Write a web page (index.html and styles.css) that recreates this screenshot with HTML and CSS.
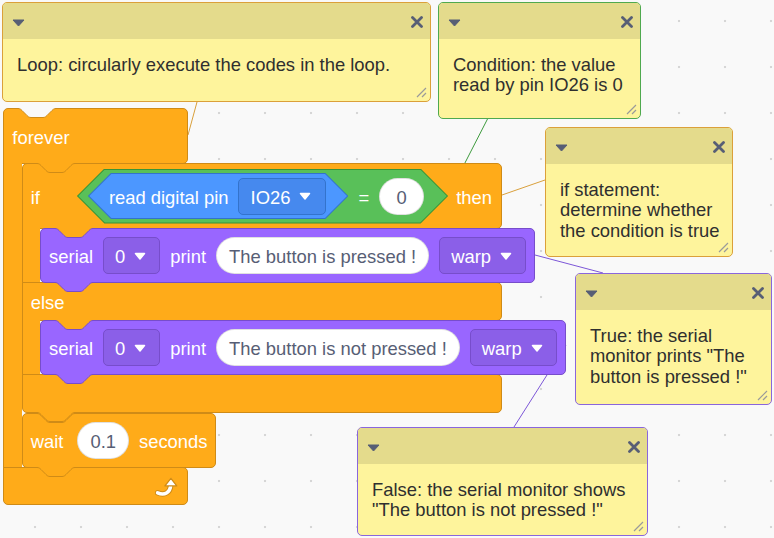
FILE: index.html
```html
<!DOCTYPE html>
<html lang="en">
<head>
<meta charset="utf-8">
<title>Blocks</title>
<link rel="stylesheet" href="styles.css">
</head>
<body>
<div class="canvas">
  <svg class="links" width="774" height="538" viewBox="0 0 774 538" aria-hidden="true">
    <line class="l-orange" x1="188" y1="135" x2="197" y2="102"/>
    <line class="l-green" x1="449" y1="194" x2="488" y2="118"/>
    <line class="l-orange" x1="502" y1="195" x2="545" y2="180"/>
    <line class="l-purple" x1="535" y1="255" x2="603" y2="273"/>
    <line class="l-purple" x1="566" y1="345" x2="514" y2="427"/>
  </svg>

  <div class="script">
    <div class="block c-block control forever">
      <svg class="notch" width="38" height="10" viewBox="0 0 38 10"><path class="nf" d="M0,0 V0.5 c2,0 3,1 4,2 l5,5 c1,1 2,2 4,2 h12 c2,0 3,-1 4,-2 l5,-5 c1,-1 2,-2 4,-2 V0 Z"/><path class="ns" d="M0,0.5 c2,0 3,1 4,2 l5,5 c1,1 2,2 4,2 h12 c2,0 3,-1 4,-2 l5,-5 c1,-1 2,-2 4,-2"/></svg>
      <div class="arm top-arm"><span class="t">forever</span></div>
      <div class="mouth">
        <div class="spine"></div>
        <div class="stack">

          <div class="block c-block control if-block">
            <svg class="notch" width="38" height="10" viewBox="0 0 38 10"><path class="nf" d="M0,0 V0.5 c2,0 3,1 4,2 l5,5 c1,1 2,2 4,2 h12 c2,0 3,-1 4,-2 l5,-5 c1,-1 2,-2 4,-2 V0 Z"/><path class="ns" d="M0,0.5 c2,0 3,1 4,2 l5,5 c1,1 2,2 4,2 h12 c2,0 3,-1 4,-2 l5,-5 c1,-1 2,-2 4,-2"/></svg>
            <div class="arm top-arm">
              <span class="t if-label">if</span>
              <div class="hex op">
                <div class="hex sensing">
                  <span class="t">read digital pin</span>
                  <div class="dropdown pin-dd"><span class="t">IO26</span><svg class="caret" width="12" height="8" viewBox="0 0 12 8"><path d="M1.5,1.5 H10.5 L6,7 Z"/></svg></div>
                </div>
                <span class="t">=</span>
                <div class="pill num"><span class="t">0</span></div>
              </div>
              <span class="t then">then</span>
            </div>
            <div class="mouth">
              <div class="spine"></div>
              <div class="stack">
                <div class="block stack-block looks">
                  <svg class="notch" width="38" height="10" viewBox="0 0 38 10"><path class="nf" d="M0,0 V0.5 c2,0 3,1 4,2 l5,5 c1,1 2,2 4,2 h12 c2,0 3,-1 4,-2 l5,-5 c1,-1 2,-2 4,-2 V0 Z"/><path class="ns" d="M0,0.5 c2,0 3,1 4,2 l5,5 c1,1 2,2 4,2 h12 c2,0 3,-1 4,-2 l5,-5 c1,-1 2,-2 4,-2"/></svg>
                  <span class="t">serial</span>
                  <div class="dropdown"><span class="t">0</span><svg class="caret" width="12" height="8" viewBox="0 0 12 8"><path d="M1.5,1.5 H10.5 L6,7 Z"/></svg></div>
                  <span class="t">print</span>
                  <div class="pill"><span class="t">The button is pressed !</span></div>
                  <div class="dropdown"><span class="t">warp</span><svg class="caret" width="12" height="8" viewBox="0 0 12 8"><path d="M1.5,1.5 H10.5 L6,7 Z"/></svg></div>
                  <svg class="tab" width="38" height="10" viewBox="0 0 38 10"><path class="nf" d="M0,0 V0.5 c2,0 3,1 4,2 l5,5 c1,1 2,2 4,2 h12 c2,0 3,-1 4,-2 l5,-5 c1,-1 2,-2 4,-2 V0 Z"/><path class="ns" d="M0,0.5 c2,0 3,1 4,2 l5,5 c1,1 2,2 4,2 h12 c2,0 3,-1 4,-2 l5,-5 c1,-1 2,-2 4,-2"/></svg>
                </div>
              </div>
            </div>
            <div class="arm mid-arm"><span class="t">else</span></div>
            <div class="mouth">
              <div class="spine"></div>
              <div class="stack">
                <div class="block stack-block looks">
                  <svg class="notch" width="38" height="10" viewBox="0 0 38 10"><path class="nf" d="M0,0 V0.5 c2,0 3,1 4,2 l5,5 c1,1 2,2 4,2 h12 c2,0 3,-1 4,-2 l5,-5 c1,-1 2,-2 4,-2 V0 Z"/><path class="ns" d="M0,0.5 c2,0 3,1 4,2 l5,5 c1,1 2,2 4,2 h12 c2,0 3,-1 4,-2 l5,-5 c1,-1 2,-2 4,-2"/></svg>
                  <span class="t">serial</span>
                  <div class="dropdown"><span class="t">0</span><svg class="caret" width="12" height="8" viewBox="0 0 12 8"><path d="M1.5,1.5 H10.5 L6,7 Z"/></svg></div>
                  <span class="t">print</span>
                  <div class="pill"><span class="t">The button is not pressed !</span></div>
                  <div class="dropdown"><span class="t">warp</span><svg class="caret" width="12" height="8" viewBox="0 0 12 8"><path d="M1.5,1.5 H10.5 L6,7 Z"/></svg></div>
                  <svg class="tab" width="38" height="10" viewBox="0 0 38 10"><path class="nf" d="M0,0 V0.5 c2,0 3,1 4,2 l5,5 c1,1 2,2 4,2 h12 c2,0 3,-1 4,-2 l5,-5 c1,-1 2,-2 4,-2 V0 Z"/><path class="ns" d="M0,0.5 c2,0 3,1 4,2 l5,5 c1,1 2,2 4,2 h12 c2,0 3,-1 4,-2 l5,-5 c1,-1 2,-2 4,-2"/></svg>
                </div>
              </div>
            </div>
            <div class="arm bottom-arm"></div>
            <svg class="tab" width="38" height="10" viewBox="0 0 38 10"><path class="nf" d="M0,0 V0.5 c2,0 3,1 4,2 l5,5 c1,1 2,2 4,2 h12 c2,0 3,-1 4,-2 l5,-5 c1,-1 2,-2 4,-2 V0 Z"/><path class="ns" d="M0,0.5 c2,0 3,1 4,2 l5,5 c1,1 2,2 4,2 h12 c2,0 3,-1 4,-2 l5,-5 c1,-1 2,-2 4,-2"/></svg>
          </div>

          <div class="block stack-block control wait">
            <svg class="notch" width="38" height="10" viewBox="0 0 38 10"><path class="nf" d="M0,0 V0.5 c2,0 3,1 4,2 l5,5 c1,1 2,2 4,2 h12 c2,0 3,-1 4,-2 l5,-5 c1,-1 2,-2 4,-2 V0 Z"/><path class="ns" d="M0,0.5 c2,0 3,1 4,2 l5,5 c1,1 2,2 4,2 h12 c2,0 3,-1 4,-2 l5,-5 c1,-1 2,-2 4,-2"/></svg>
            <span class="t">wait</span>
            <div class="pill num wait-pill"><span class="t">0.1</span></div>
            <span class="t">seconds</span>
            <svg class="tab" width="38" height="10" viewBox="0 0 38 10"><path class="nf" d="M0,0 V0.5 c2,0 3,1 4,2 l5,5 c1,1 2,2 4,2 h12 c2,0 3,-1 4,-2 l5,-5 c1,-1 2,-2 4,-2 V0 Z"/><path class="ns" d="M0,0.5 c2,0 3,1 4,2 l5,5 c1,1 2,2 4,2 h12 c2,0 3,-1 4,-2 l5,-5 c1,-1 2,-2 4,-2"/></svg>
          </div>

        </div>
      </div>
      <div class="arm bottom-arm">
        <svg class="repeat" width="23" height="21" viewBox="0 0 22 20" aria-hidden="true">
          <path d="M2.5,16 C9,18.8 14.5,16 15,9" fill="none" stroke="#CF8B17" stroke-width="5.2" stroke-linecap="round"/>
          <path d="M2.5,16 C9,18.8 14.5,16 15,9" fill="none" stroke="#fff" stroke-width="3.4" stroke-linecap="round"/>
          <path d="M9.5,9.5 L15.2,2.2 L20.8,9.5 Z" fill="#fff" stroke="#CF8B17" stroke-width="1.2" stroke-linejoin="round"/>
        </svg>
      </div>
    </div>
  </div>

  <div class="comment cm-orange cm-loop">
    <div class="c-head">
      <svg class="c-caret" width="13" height="8" viewBox="0 0 13 8"><path d="M1,1 H12 L6.5,7 Z"/></svg>
      <svg class="c-close" width="12" height="12" viewBox="0 0 12 12"><path d="M1.5,1.5 L10.5,10.5 M10.5,1.5 L1.5,10.5"/></svg>
    </div>
    <div class="c-body">Loop: circularly execute the codes in the loop.</div>
    <svg class="c-resize" width="12" height="12" viewBox="0 0 12 12"><path d="M11,2 L2,11 M11,7 L7,11"/></svg>
  </div>

  <div class="comment cm-green cm-cond">
    <div class="c-head">
      <svg class="c-caret" width="13" height="8" viewBox="0 0 13 8"><path d="M1,1 H12 L6.5,7 Z"/></svg>
      <svg class="c-close" width="12" height="12" viewBox="0 0 12 12"><path d="M1.5,1.5 L10.5,10.5 M10.5,1.5 L1.5,10.5"/></svg>
    </div>
    <div class="c-body">Condition: the value read by pin IO26 is 0</div>
    <svg class="c-resize" width="12" height="12" viewBox="0 0 12 12"><path d="M11,2 L2,11 M11,7 L7,11"/></svg>
  </div>

  <div class="comment cm-orange cm-if">
    <div class="c-head">
      <svg class="c-caret" width="13" height="8" viewBox="0 0 13 8"><path d="M1,1 H12 L6.5,7 Z"/></svg>
      <svg class="c-close" width="12" height="12" viewBox="0 0 12 12"><path d="M1.5,1.5 L10.5,10.5 M10.5,1.5 L1.5,10.5"/></svg>
    </div>
    <div class="c-body">if statement: determine whether the condition is true</div>
    <svg class="c-resize" width="12" height="12" viewBox="0 0 12 12"><path d="M11,2 L2,11 M11,7 L7,11"/></svg>
  </div>

  <div class="comment cm-purple cm-true">
    <div class="c-head">
      <svg class="c-caret" width="13" height="8" viewBox="0 0 13 8"><path d="M1,1 H12 L6.5,7 Z"/></svg>
      <svg class="c-close" width="12" height="12" viewBox="0 0 12 12"><path d="M1.5,1.5 L10.5,10.5 M10.5,1.5 L1.5,10.5"/></svg>
    </div>
    <div class="c-body">True: the serial monitor prints "The button is pressed !"</div>
    <svg class="c-resize" width="12" height="12" viewBox="0 0 12 12"><path d="M11,2 L2,11 M11,7 L7,11"/></svg>
  </div>

  <div class="comment cm-purple cm-false">
    <div class="c-head">
      <svg class="c-caret" width="13" height="8" viewBox="0 0 13 8"><path d="M1,1 H12 L6.5,7 Z"/></svg>
      <svg class="c-close" width="12" height="12" viewBox="0 0 12 12"><path d="M1.5,1.5 L10.5,10.5 M10.5,1.5 L1.5,10.5"/></svg>
    </div>
    <div class="c-body">False: the serial monitor shows "The button is not pressed !"</div>
    <svg class="c-resize" width="12" height="12" viewBox="0 0 12 12"><path d="M11,2 L2,11 M11,7 L7,11"/></svg>
  </div>
</div>
</body>
</html>
```

FILE: styles.css
```css
html, body {
  margin: 0;
  padding: 0;
  background: #F9F9F9;
}

.canvas {
  position: relative;
  width: 774px;
  height: 538px;
  overflow: hidden;
  background-color: #F9F9F9;
  background-image: radial-gradient(circle at center, #D6D6D6 0, #D6D6D6 1px, transparent 1.6px);
  background-size: 46px 46px;
  background-position: 12px -2px;
  font-family: "Liberation Sans", Arial, sans-serif;
  font-size: 18.4px;
}

/* connector lines */
.links {
  position: absolute;
  left: 0;
  top: 0;
}
.links line { stroke-width: 1; }
.l-orange { stroke: #D9A03C; }
.l-green { stroke: #3E9B3E; }
.l-purple { stroke: #7D57D8; }

/* script stack (free canvas item) */
.script {
  position: absolute;
  left: 3.3px;
  top: 108px;
  --behind: #F9F9F9;
}

.block {
  position: relative;
  box-sizing: border-box;
  color: #fff;
}

.control { --fill: #FFAB19; --stroke: #CF8B17; }
.looks { --fill: #9966FF; --stroke: #774DCB; --dd: #8B5FE8; }

.t {
  padding-top: 3px;
  white-space: nowrap;
  line-height: 1.15;
}

/* C blocks */
.c-block {
  display: flex;
  flex-direction: column;
  align-items: flex-start;
}

.arm {
  box-sizing: border-box;
  display: flex;
  align-items: center;
  flex: none;
  padding: 0 8px;
  background: var(--fill);
  border: 1px solid var(--stroke);
}

.forever > .arm { width: 185px; }
.if-block > .arm { width: 480px; }

.top-arm { border-radius: 5px 5px 5px 0; }
.mid-arm { border-radius: 0 5px 5px 0; }
.bottom-arm { border-radius: 0 5px 5px 5px; }

.forever > .top-arm { height: 56px; }
.if-block > .top-arm { height: 66px; }
.if-block > .mid-arm { height: 39px; }
.if-block > .bottom-arm { height: 39px; }
.forever > .bottom-arm {
  height: 38px;
  justify-content: flex-end;
  padding-right: 9px;
}

.mouth {
  display: flex;
  margin: -1px 0;
}

.spine {
  flex: none;
  width: 18.4px;
  box-sizing: border-box;
  background: var(--fill);
  border-left: 1px solid var(--stroke);
}

.stack {
  display: flex;
  flex-direction: column;
  align-items: flex-start;
  --behind: var(--fill);
}

/* stack blocks */
.stack-block {
  display: flex;
  align-items: center;
  gap: 10px;
  height: 55px;
  padding: 0 8px;
  background: var(--fill);
  border: 1px solid var(--stroke);
  border-radius: 5px;
}

/* notches and tabs */
.notch, .tab {
  position: absolute;
  left: 14px;
  overflow: visible;
}
.notch { top: -1px; z-index: 1; }
.tab { top: 100%; z-index: 2; }
.c-block > .notch { top: 0; left: 15px; }
.c-block > .tab { top: calc(100% - 1px); left: 15px; }

.notch .nf { fill: var(--behind); }
.tab .nf { fill: var(--fill); }
.notch .ns, .tab .ns {
  fill: none;
  stroke: var(--stroke);
  stroke-width: 1;
}

/* if row */
.if-label { margin-right: 37px; }
.then { margin-left: 8px; }

.hex {
  position: relative;
  box-sizing: border-box;
  display: flex;
  align-items: center;
  flex: none;
  height: var(--h);
  background: var(--stroke);
  clip-path: polygon(var(--tip) 0, calc(100% - var(--tip)) 0, 100% 50%, calc(100% - var(--tip)) 100%, var(--tip) 100%, 0 50%);
}
.hex::before {
  content: "";
  position: absolute;
  inset: 1px;
  background: var(--fill);
  clip-path: polygon(calc(var(--tip) - 0.6px) 0, calc(100% - var(--tip) + 0.6px) 0, calc(100% - 0.4px) 50%, calc(100% - var(--tip) + 0.6px) 100%, calc(var(--tip) - 0.6px) 100%, 0.4px 50%);
}
.hex > * { position: relative; }

.hex.op {
  --fill: #59C059;
  --stroke: #389438;
  --h: 55px;
  --tip: 27.5px;
  gap: 10px;
  padding: 0 24px 0 11px;
}
.hex.sensing {
  --fill: #4C97FF;
  --stroke: #3373CC;
  --dd: #4689EE;
  --h: 46px;
  --tip: 23px;
  gap: 9px;
  padding: 0 22px 0 21px;
}

/* inputs */
.dropdown {
  display: flex;
  align-items: center;
  gap: 9px;
  box-sizing: border-box;
  height: 37px;
  padding: 0 13px 0 11px;
  background: var(--dd);
  border: 1px solid var(--stroke);
  border-radius: 5px;
}
.pin-dd { padding: 0 14px 0 12px; }
.caret path {
  fill: #fff;
  stroke: #fff;
  stroke-width: 1.5;
  stroke-linejoin: round;
}

.pill {
  display: flex;
  align-items: center;
  box-sizing: border-box;
  height: 37px;
  padding: 0 12px;
  background: #fff;
  color: #575E75;
  border: 1px solid rgba(0, 0, 0, 0.12);
  border-radius: 19px;
}
.pill.num {
  min-width: 45px;
  justify-content: center;
}
.wait-pill { margin-left: 4px; }

.repeat { display: block; }

/* comments (free canvas items) */
.comment {
  position: absolute;
  box-sizing: border-box;
  display: flex;
  flex-direction: column;
  overflow: hidden;
  background: #FEF49C;
  border: 1px solid var(--cb);
  border-radius: 5px;
  font-size: 18.4px;
  line-height: 20.4px;
  color: #2F2F2F;
}
.cm-orange { --cb: #DBA03A; }
.cm-green { --cb: #4FA94F; }
.cm-purple { --cb: #8A66DC; }

.cm-loop { left: 2px; top: 2px; width: 429px; height: 100px; }
.cm-cond { left: 438px; top: 2px; width: 203px; height: 117px; }
.cm-if { left: 545px; top: 127px; width: 188px; height: 130px; }
.cm-true { left: 575px; top: 273px; width: 197px; height: 132px; }
.cm-false { left: 357px; top: 427px; width: 291px; height: 109px; }

.c-head {
  flex: none;
  height: 36px;
  display: flex;
  align-items: center;
  justify-content: space-between;
  padding: 0 7px 0 9px;
  background: #E4DB8C;
}
.c-caret { margin-top: 4px; }
.c-caret path { fill: #575E75; stroke: #575E75; stroke-width: 1; stroke-linejoin: round; }
.c-close { margin-top: 2px; }
.c-close path { fill: none; stroke: #575E75; stroke-width: 2.8; stroke-linecap: round; }

.c-body {
  padding: 16px 10px 0 14px;
}

.c-resize {
  position: absolute;
  right: 3px;
  bottom: 3px;
}
.c-resize path { fill: none; stroke: #9A9A9A; stroke-width: 1.2; }
```
